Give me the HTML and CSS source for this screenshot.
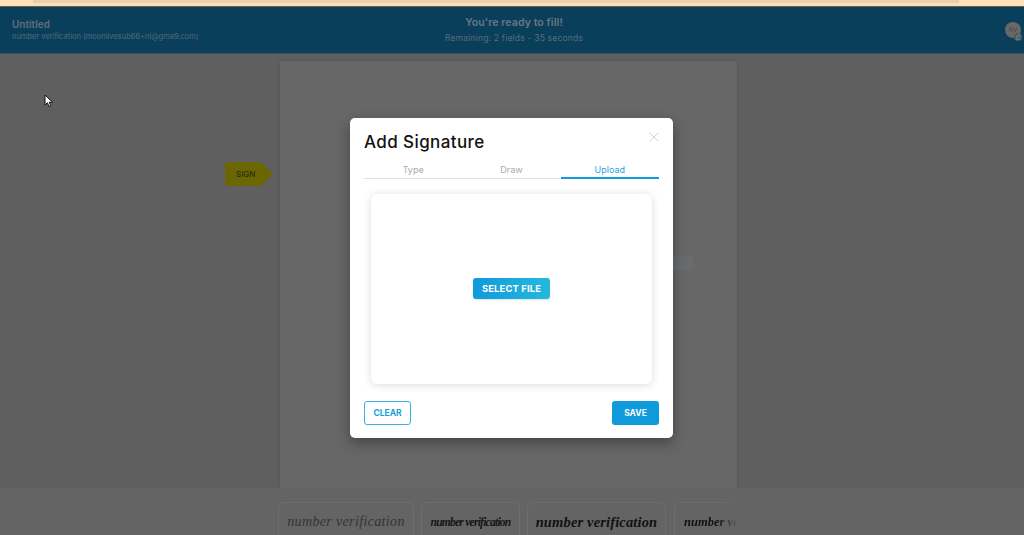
FILE: index.html
```html
<!DOCTYPE html>
<html lang="en">
<head>
    <meta charset="UTF-8">
    <meta name="viewport" content="width=device-width, initial-scale=1.0">
    <title>Add Signature</title>
    <link rel="stylesheet" href="styles.css">
</head>
<body>
    <div class="notice-strip"><div class="notice-inner"></div></div>

    <header class="topbar">
        <div class="doc-info">
            <div class="doc-title">Untitled</div>
            <div class="doc-owner">number verification (moonlivesub66+nl@gma9.com)</div>
        </div>
        <div class="fill-status">
            <div class="fill-title">You're ready to fill!</div>
            <div class="fill-remaining">Remaining: 2 fields - 35 seconds</div>
        </div>
        <div class="avatar">NV
            <span class="avatar-badge">
                <svg width="8" height="8" viewBox="0 0 8 8">
                    <path d="M4.8 1.2l1 1L3.6 4.6l-1.2.2.2-1.2zM1.5 6.3h5" stroke="#7a7f82" stroke-width="0.9" fill="none"/>
                </svg>
            </span>
        </div>
    </header>

    <main class="workspace">
        <div class="sign-tag">SIGN</div>
        <div class="paper"></div>
        <div class="field-hint"></div>
        <svg class="cursor" width="10" height="14" viewBox="0 0 10 14">
            <path d="M1 1v10l2.4-2.2L5 12.6l1.8-.8L5.2 8.2H8.6z" fill="#fff" stroke="#111" stroke-width="1"/>
        </svg>
    </main>

    <footer class="sig-strip">
        <div class="sig-card sig-one">number verification</div>
        <div class="sig-card sig-two">number verification</div>
        <div class="sig-card sig-three">number verification</div>
        <div class="sig-card sig-four">number ve</div>
    </footer>

    <div class="modal">
        <div class="modal-head">
            <h2>Add Signature</h2>
            <svg class="modal-close" width="10" height="10" viewBox="0 0 10 10">
                <path d="M.5.5l9 9M9.5.5l-9 9" stroke="#d2d2d2" stroke-width="1" fill="none"/>
            </svg>
        </div>
        <div class="tabs">
            <div class="tab">Type</div>
            <div class="tab">Draw</div>
            <div class="tab active">Upload</div>
        </div>
        <div class="upload-box">
            <button class="btn-select">SELECT FILE</button>
        </div>
        <div class="modal-actions">
            <button class="btn-clear">CLEAR</button>
            <button class="btn-save">SAVE</button>
        </div>
    </div>
</body>
</html>
```

FILE: styles.css
```css
html, body {
    height: 100%;
}

body {
    margin: 0;
    height: 535px;
    overflow: hidden;
    font-family: Inter, "Noto Sans", sans-serif;
    background-color: #5f5f5f;
    display: flex;
    flex-direction: column;
    position: relative;
}

.notice-strip {
    height: 7px;
    background-color: #fddfba;
    border-bottom: 1px solid #6b5f50;
    box-sizing: border-box;
    flex-shrink: 0;
}

.notice-inner {
    height: 3px;
    margin: 0 65px 0 33px;
    background-color: #ecd0ad;
}

/* Top bar */
.topbar {
    height: 47px;
    flex-shrink: 0;
    background-color: #0a3f5c;
    border-bottom: 1px solid #3c4f5a;
    box-sizing: border-box;
    display: grid;
    grid-template-columns: 1fr auto 1fr;
    align-items: center;
    padding: 0 3px 2px 12px;
}

.doc-title {
    font-size: 10px;
    font-weight: 600;
    color: #5f6f79;
}

.doc-owner {
    font-size: 7.5px;
    color: #54697a;
    margin-top: 2px;
}

.fill-status {
    text-align: center;
    margin-right: 5px;
}

.fill-title {
    font-size: 10.5px;
    font-weight: 600;
    color: #6b7780;
    letter-spacing: 0.1px;
}

.fill-remaining {
    font-size: 8.5px;
    color: #566b79;
    margin-top: 4px;
    letter-spacing: 0.2px;
}

.avatar {
    justify-self: end;
    width: 16px;
    height: 16px;
    border-radius: 50%;
    background-color: #686868;
    color: #4a4a4a;
    font-size: 6px;
    line-height: 16px;
    text-align: center;
    position: relative;
    top: 1px;
}

.avatar-badge {
    position: absolute;
    right: -1px;
    bottom: -3px;
    width: 8px;
    height: 8px;
    border-radius: 50%;
    background-color: #4f5a60;
    display: flex;
}

/* Document area */
.workspace {
    flex: 1;
    position: relative;
    display: flex;
    justify-content: center;
    padding-top: 7px;
    padding-right: 7px;
    box-sizing: border-box;
    overflow: hidden;
}

.paper {
    width: 457px;
    background-color: #676767;
    box-shadow: 0 0 3px rgba(0, 0, 0, 0.15);
}

.sign-tag {
    position: absolute;
    left: 225px;
    top: 108px;
    width: 48px;
    height: 24px;
    background-color: #6b6600;
    clip-path: polygon(0 2px, 2px 0, 36px 0, 48px 12px, 36px 24px, 2px 24px, 0 22px);
    color: #2c2c14;
    font-size: 8px;
    font-weight: 500;
    line-height: 24px;
    padding-left: 11px;
    box-sizing: border-box;
}

.field-hint {
    position: absolute;
    left: 660px;
    top: 202px;
    width: 33px;
    height: 14px;
    background-color: #696b6e;
}

.cursor {
    position: absolute;
    left: 44px;
    top: 40px;
}

/* Signature strip */
.sig-strip {
    height: 47px;
    flex-shrink: 0;
    background-color: #646464;
    display: flex;
    gap: 7px;
    padding: 14px 0 0 278px;
    box-sizing: border-box;
    overflow: hidden;
}

.sig-card {
    height: 40px;
    box-sizing: border-box;
    border: 1px solid #6e6e6e;
    border-radius: 6px;
    color: #222;
    font-family: "Liberation Serif", serif;
    font-style: italic;
    display: flex;
    align-items: center;
    justify-content: center;
    white-space: nowrap;
    overflow: hidden;
}

.sig-one {
    width: 136px;
    font-size: 14px;
    color: #333;
    letter-spacing: 0.35px;
}

.sig-two {
    width: 99px;
    font-size: 11.5px;
    font-weight: 700;
    color: #151515;
    letter-spacing: -0.75px;
}

.sig-three {
    width: 139px;
    font-size: 14.5px;
    font-weight: 700;
    color: #111;
    letter-spacing: 0.15px;
}

.sig-four {
    width: 64px;
    margin-left: 1px;
    font-size: 12.5px;
    font-weight: 700;
    color: #111;
    justify-content: flex-start;
    padding-left: 9px;
    -webkit-mask-image: linear-gradient(90deg, #000 68%, transparent 100%);
    mask-image: linear-gradient(90deg, #000 68%, transparent 100%);
}

/* Modal */
.modal {
    position: absolute;
    left: 350px;
    top: 118px;
    width: 323px;
    height: 320px;
    background-color: #fff;
    border-radius: 5px;
    box-shadow: 0 5px 14px rgba(0, 0, 0, 0.35);
    padding: 14px 14px 13px;
    box-sizing: border-box;
    display: flex;
    flex-direction: column;
}

.modal-head {
    display: flex;
    justify-content: space-between;
    align-items: flex-start;
}

.modal-head h2 {
    margin: 0;
    font-size: 17px;
    line-height: 20px;
    font-weight: 500;
    color: #111;
    letter-spacing: 0.4px;
}

.tabs {
    display: flex;
    margin-top: 7px;
    border-bottom: 1px solid #e2e2e2;
}

.tab {
    flex: 1;
    text-align: center;
    font-size: 9px;
    line-height: 21px;
    height: 19px;
    color: #a9a9a9;
}

.tab.active {
    color: #1fa5e0;
    border-bottom: 2px solid #0f9adb;
    margin-bottom: -1px;
    height: 18px;
}

.upload-box {
    width: 281px;
    height: 190px;
    margin: 15px auto 0;
    border-radius: 6px;
    box-shadow: 0 1px 8px rgba(0, 0, 0, 0.14);
    display: flex;
    align-items: center;
    justify-content: center;
}

button {
    font-family: inherit;
    font-weight: 700;
    border-radius: 3px;
    padding: 0;
    cursor: pointer;
}

.btn-select {
    width: 77px;
    height: 21px;
    margin-bottom: 2px;
    border: none;
    color: #fff;
    font-size: 9.3px;
    letter-spacing: 0.2px;
    background: linear-gradient(90deg, #0f9adb, #25b9de);
    box-shadow: 0 1px 2px rgba(0, 0, 0, 0.12);
}

.modal-actions {
    display: flex;
    justify-content: space-between;
    margin-top: auto;
}

.btn-clear {
    width: 47px;
    height: 24px;
    background-color: #fff;
    border: 1px solid #3db1e2;
    color: #14a2dd;
    font-size: 8.5px;
}

.btn-save {
    width: 47px;
    height: 24px;
    background-color: #0f9adb;
    border: none;
    color: #fff;
    font-size: 8.5px;
}
```
